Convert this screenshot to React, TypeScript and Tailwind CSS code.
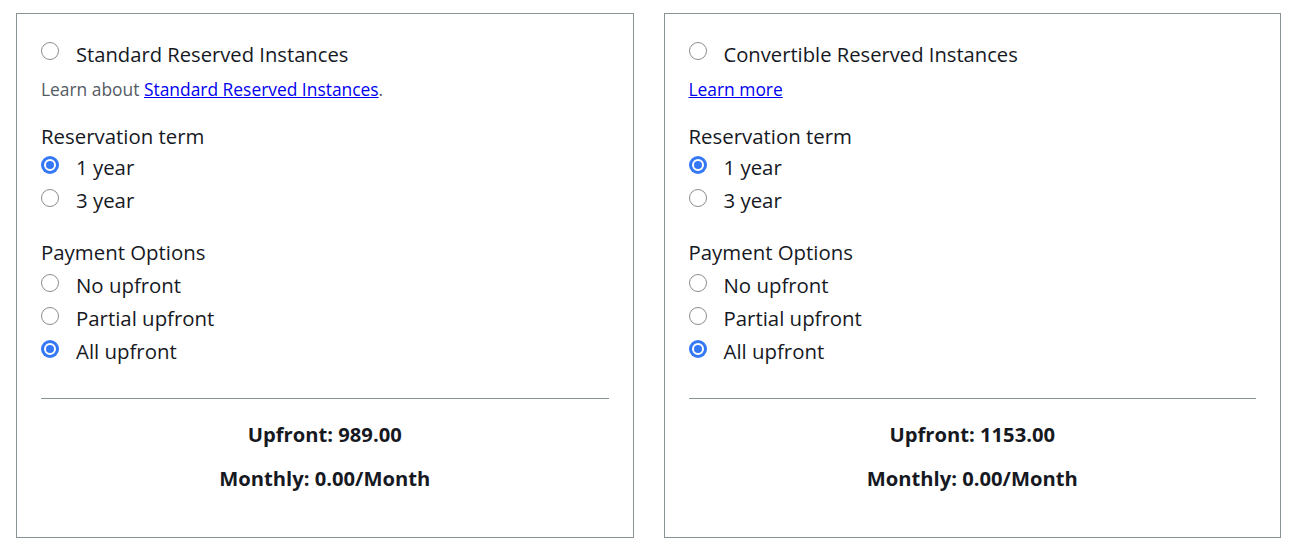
import React from "react";

const font = { fontFamily: '"Open Sans", "Noto Sans", Arial, sans-serif' };

function Radio({ checked }: { checked?: boolean }) {
  return checked ? (
    <span className="w-[18px] h-[18px] rounded-full bg-[#3478f6] flex items-center justify-center shrink-0">
      <span className="w-[12px] h-[12px] rounded-full bg-[#3478f6] border-[2px] border-white" />
    </span>
  ) : (
    <span className="w-[18px] h-[18px] rounded-full border border-[#8d8d8d] bg-white shrink-0" />
  );
}

function Option({ label, checked }: { label: string; checked?: boolean }) {
  return (
    <div className="h-[33px] flex items-center">
      <span className="w-[35px] flex mb-[5px]"><Radio checked={checked} /></span>
      <span className="text-[20.4px] text-[#16191f]">{label}</span>
    </div>
  );
}

function Card({
  title,
  learn,
  upfront,
}: {
  title: string;
  learn: React.ReactNode;
  upfront: string;
}) {
  return (
    <div className="flex-1 border border-[#879596] pt-[25px] pb-[44px] px-[24px] flex flex-col">
      <div className="h-[30px] flex items-center">
        <span className="w-[35px] flex mb-[6px]"><Radio /></span>
        <span className="text-[20.2px] text-[#16191f]">{title}</span>
      </div>
      <div className="h-[24px] mt-[8px] flex items-center text-[17.4px] text-[#545b64]">{learn}</div>
      <div className="h-[30px] mt-[20px] flex items-center text-[20.4px] text-[#16191f]">Reservation term</div>
      <Option label="1 year" checked />
      <Option label="3 year" />
      <div className="h-[30px] mt-[20px] flex items-center text-[20.4px] text-[#16191f]">Payment Options</div>
      <div className="mt-[2px] flex flex-col">
        <Option label="No upfront" />
        <Option label="Partial upfront" />
        <Option label="All upfront" checked />
      </div>
      <div className="mt-[30px] border-t border-[#879596]" />
      <div className="h-[30px] mt-[20px] flex items-center justify-center text-[20.2px] font-bold text-[#16191f]">
        Upfront: {upfront}
      </div>
      <div className="h-[30px] mt-[14px] flex items-center justify-center text-[20.2px] font-bold text-[#16191f]">
        Monthly: 0.00/Month
      </div>
    </div>
  );
}

export default function App() {
  return (
    <div style={font} className="w-[1296px] h-[560px] bg-white pt-[13px] pl-[16px] pr-[15px] flex gap-[30px] items-start">
      <Card
        title="Standard Reserved Instances"
        upfront="989.00"
        learn={
          <span>
            Learn about{" "}
            <a href="#" className="text-[#0000ee] underline">
              Standard Reserved Instances
            </a>
            .
          </span>
        }
      />
      <Card
        title="Convertible Reserved Instances"
        upfront="1153.00"
        learn={
          <a href="#" className="text-[#0000ee] underline">
            Learn more
          </a>
        }
      />
    </div>
  );
}
